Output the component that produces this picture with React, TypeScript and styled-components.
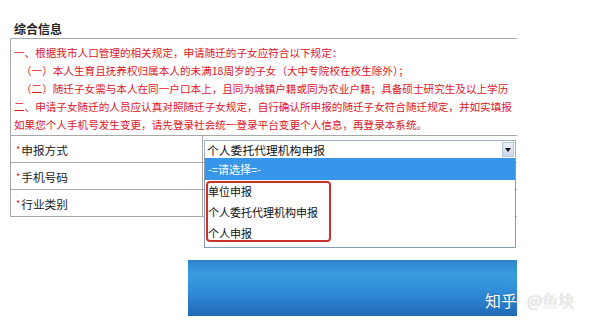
import React from 'react';
import styled, { createGlobalStyle } from 'styled-components';

const GlobalStyle = createGlobalStyle`
  html, body {
    margin: 0;
    padding: 0;
    background: #ffffff;
  }
  body {
    font-family: "Noto Sans CJK SC", "Noto Sans", sans-serif;
    color: #222;
  }
`;

const Page = styled.div`
  position: relative;
  width: 595px;
  height: 327px;
  overflow: hidden;
  padding: 20px 0 0 10px;
  box-sizing: border-box;
`;

const Title = styled.div`
  font-size: 12px;
  font-weight: bold;
  line-height: 18px;
  padding-left: 4px;
  color: #222;
`;

const Panel = styled.div`
  width: 507px;
  border: 1px solid #a8a8a8;
  border-bottom: none;
  border-right: none;
  box-sizing: border-box;
`;

const Notice = styled.div`
  padding: 5px 0 1px 3px;
  overflow: hidden;
  white-space: nowrap;
`;

const NoticeLine = styled.div<{ $indent?: boolean }>`
  font-size: 10.6px;
  line-height: 18px;
  color: #e0141e;
  padding-left: ${ (p) => (p.$indent ? '7px' : '0') };
`;

const Row = styled.div`
  display: grid;
  grid-template-columns: 192px 1fr;
  height: 27px;
  border-top: 1px solid #a8a8a8;
  box-sizing: border-box;
  &:last-child {
    border-bottom: 1px solid #a8a8a8;
    height: 28px;
  }
`;

const Label = styled.div`
  display: flex;
  align-items: center;
  padding-left: 5px;
  font-size: 11.7px;
  color: #222;
  border-right: 1px solid #a8a8a8;
`;

const Star = styled.span`
  color: #e0141e;
  font-size: 9px;
  margin-right: 1px;
  align-self: flex-start;
  margin-top: 7px;
`;

const Cell = styled.div`
  position: relative;
  padding: 4px 0 0 1px;
`;

const Select = styled.div`
  display: flex;
  align-items: center;
  width: 312px;
  height: 19px;
  border: 1px solid #9fb3c8;
  box-sizing: border-box;
  background: #fff;
`;

const SelectText = styled.div`
  flex: 1;
  font-size: 11.8px;
  padding-left: 2px;
  color: #111;
  line-height: 17px;
`;

const ArrowButton = styled.div`
  width: 12px;
  height: 15px;
  margin-right: 1px;
  display: flex;
  align-items: center;
  justify-content: center;
  background: linear-gradient(#e8eff8, #c9d8ec);
  border: 1px solid #b7c7dc;
  box-sizing: border-box;
`;

const Triangle = styled.div`
  width: 0;
  height: 0;
  border-left: 3.5px solid transparent;
  border-right: 3.5px solid transparent;
  border-top: 4px solid #111;
`;

const DropList = styled.div`
  position: absolute;
  left: 1px;
  top: 22px;
  width: 312px;
  border: 1px solid #8a9bb0;
  border-top: none;
  box-sizing: border-box;
  background: #fff;
  z-index: 2;
  padding-bottom: 3px;
`;

const Option = styled.div<{ $active?: boolean }>`
  height: ${ (p) => (p.$active ? '22px' : '21px') };
  line-height: ${ (p) => (p.$active ? '22px' : '21px') };
  font-size: 11px;
  padding-left: 3px;
  color: ${ (p) => (p.$active ? '#ffffff' : '#111') };
  background: ${ (p) => (p.$active ? '#3795ea' : 'transparent') };
`;

const Options = styled.div`
  position: relative;
  padding-top: 1px;
`;

const Highlight = styled.div`
  position: absolute;
  left: 1px;
  top: 1px;
  width: 125px;
  height: 61px;
  border: 2.5px solid #c9322c;
  border-radius: 4px;
  box-sizing: border-box;
`;

const BlueBar = styled.div`
  margin: 43px 0 0 178px;
  width: 329px;
  height: 56px;
  background: linear-gradient(#2c82cc 0%, #3a9de0 25%, #2f8ad6 60%, #2169b7 100%);
`;

const Watermark = styled.div`
  position: absolute;
  left: 485px;
  top: 289px;
  display: flex;
  gap: 10px;
  font-size: 16px;
  line-height: 22px;
  color: #ffffff;
  text-shadow: 0 0 2px rgba(0, 0, 0, 0.25);
`;

const Handle = styled.span`
  color: #f2f2f2;
  text-shadow: 0 0 1px rgba(0, 0, 0, 0.35);
`;

const notices = [
  { text: '一、根据我市人口管理的相关规定，申请随迁的子女应符合以下规定：' },
  { text: '（一）本人生育且抚养权归属本人的未满18周岁的子女（大中专院校在校生除外）；', indent: true },
  { text: '（二）随迁子女需与本人在同一户口本上，且同为城镇户籍或同为农业户籍；具备硕士研究生及以上学历', indent: true },
  { text: '二、申请子女随迁的人员应认真对照随迁子女规定，自行确认所申报的随迁子女符合随迁规定，并如实填报' },
  { text: '如果您个人手机号发生变更，请先登录社会统一登录平台变更个人信息，再登录本系统。' },
];

const App = () => (
  <Page>
    <GlobalStyle />
    <Title>综合信息</Title>
    <Panel>
      <Notice>
        {notices.map((n, i) => (
          <NoticeLine key={ i } $indent={ n.indent }>{n.text}</NoticeLine>
        ))}
      </Notice>
      <Row>
        <Label><Star>*</Star>申报方式</Label>
        <Cell>
          <Select>
            <SelectText>个人委托代理机构申报</SelectText>
            <ArrowButton><Triangle /></ArrowButton>
          </Select>
          <DropList>
            <Option $active>-=请选择=-</Option>
            <Options>
              <Option>单位申报</Option>
              <Option>个人委托代理机构申报</Option>
              <Option>个人申报</Option>
              <Highlight />
            </Options>
          </DropList>
        </Cell>
      </Row>
      <Row>
        <Label><Star>*</Star>手机号码</Label>
        <Cell />
      </Row>
      <Row>
        <Label><Star>*</Star>行业类别</Label>
        <Cell />
      </Row>
    </Panel>
    <BlueBar />
    <Watermark>
      <span>知乎</span>
      <Handle>@鱼块</Handle>
    </Watermark>
  </Page>
);

export default App;
